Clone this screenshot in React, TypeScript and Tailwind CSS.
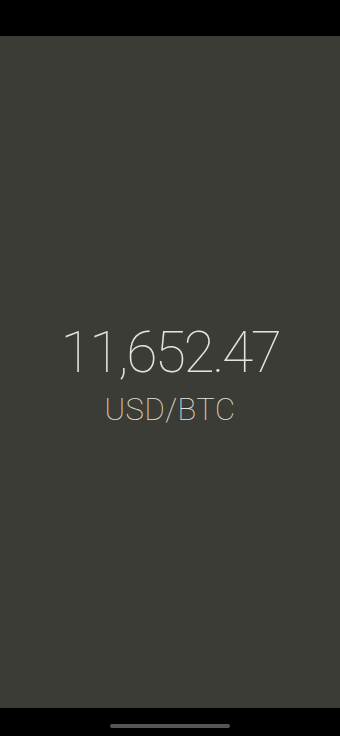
import React from "react"

export default function App() {
  return (
    <div className="flex h-[736px] w-full flex-col bg-black font-['Roboto',sans-serif]">
      <div className="h-[36px] bg-black" />
      <main className="flex flex-1 flex-col items-center justify-center bg-[#3c3c37] pt-[4px] text-[#e4e4de]">
        <div className="text-[57px] font-thin leading-none tracking-[-2.5px]">11,652.47</div>
        <div className="mt-[13px] text-[31px] font-thin leading-none tracking-[0.5px]">USD/BTC</div>
      </main>
      <div className="flex h-[28px] items-center justify-center bg-black pt-[8px]">
        <div className="h-[4px] w-[120px] rounded-full bg-[#555555]" />
      </div>
    </div>
  )
}
